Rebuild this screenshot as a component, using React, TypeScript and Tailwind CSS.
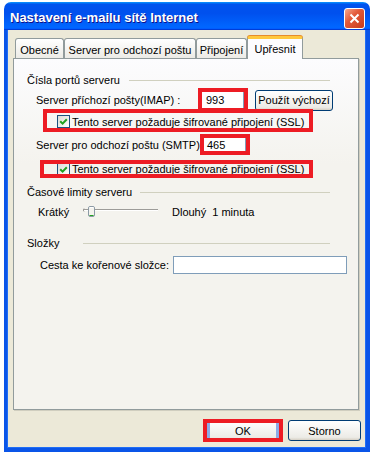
import React from "react";

const RedFrame = ({ className }: { className: string }) => (
  <div
    className={`absolute border-4 border-[#ED1C24] pointer-events-none ${className}`}
  />
);

const CheckBox = () => (
  <div className="w-[13px] h-[13px] shrink-0 border border-[#1C5180] bg-[linear-gradient(135deg,#DCDCD7,#FFFFFF)] flex items-center justify-center">
    <svg width="9" height="9" viewBox="0 0 9 9">
      <path
        d="M1.2 4.2 L3.6 6.6 L7.8 2.2"
        stroke="#21A121"
        strokeWidth="2"
        fill="none"
      />
    </svg>
  </div>
);

const GroupHeader = ({
  title,
  textClass,
  lineClass,
}: {
  title: string;
  textClass: string;
  lineClass: string;
}) => (
  <div className="h-[14px] flex items-center pl-[13px] shrink-0">
    <span className={`whitespace-nowrap ${textClass}`}>{title}</span>
    <div className={`flex-1 h-px bg-[#D0D0BF] mr-[28px] ${lineClass}`} />
  </div>
);

const xpButton =
  "rounded-[3px] border border-[#003C74] bg-[linear-gradient(180deg,#FFFFFF,#ECEBE6_86%,#D6D0C5)] flex items-center justify-center";

const Tab = ({ width, children }: { width: string; children: React.ReactNode }) => (
  <div
    className={`${width} h-[20px] shrink-0 rounded-t-[3px] border border-b-0 border-[#919B9C] bg-[linear-gradient(180deg,#FFFFFF,#ECEBE6)] flex items-center justify-center pt-[2px] whitespace-nowrap`}
  >
    {children}
  </div>
);

const Slider = () => (
  <svg width="78" height="16" viewBox="0 0 78 16" className="shrink-0">
    <path d="M2 4.5 Q0.5 6 2 7.5" stroke="#9D9C99" fill="none" />
    <line x1="2" y1="5.5" x2="76" y2="5.5" stroke="#9D9C99" />
    <line x1="2" y1="6.5" x2="76" y2="6.5" stroke="#FFFFFF" />
    <rect
      x="6.5"
      y="2.5"
      width="6"
      height="10"
      rx="1.5"
      fill="#F4F3EE"
      stroke="#8C9AA6"
    />
    <line x1="7.5" y1="11.5" x2="11.5" y2="11.5" stroke="#21A121" />
    <line x1="7.5" y1="3.5" x2="11.5" y2="3.5" stroke="#FFFFFF" />
  </svg>
);

export default function App() {
  return (
    <div className="w-[371px] h-[453px] bg-white pt-[2px] pl-[4px] font-['Liberation_Sans',Arial,sans-serif] text-[11px] leading-[14px] text-black">
      <div className="w-[366px] h-[450px] flex flex-col">
        {/* title bar */}
        <div className="h-[28px] shrink-0 rounded-t-[7px] bg-[linear-gradient(180deg,#0997FF,#0053EE_8%,#0050EE_40%,#0066FF_88%,#0066FF_93%,#005BFF_95%,#003DD7_96%,#003DD7)] flex items-start justify-between pl-[6px] pr-[5px] pt-[4px]">
          <span className="text-white font-bold text-[13px] leading-[24px] [text-shadow:1px_1px_#0F1089] whitespace-nowrap">
            Nastavení e-mailu sítě Internet
          </span>
          <div className="mt-[2px] w-[21px] h-[21px] rounded-[3px] border border-white bg-[linear-gradient(135deg,#F5A88E,#E35B3B_40%,#C73A1C)] flex items-center justify-center">
            <svg width="11" height="11" viewBox="0 0 11 11">
              <path
                d="M1.5 1.5 L9.5 9.5 M9.5 1.5 L1.5 9.5"
                stroke="#FFFFFF"
                strokeWidth="2"
              />
            </svg>
          </div>
        </div>

        {/* body */}
        <div className="flex-1 flex flex-col bg-[#ECE9D8] border-l-[3px] border-r-[4px] border-b-[4px] border-[#0A55E8] shadow-[inset_1px_0_#1F6EF5,inset_-1px_0_#1F6EF5,inset_0_-1px_#1F6EF5]">
          {/* tabs */}
          <div className="h-[28px] shrink-0 flex items-end pl-[8px]">
            <Tab width="w-[49px]">Obecné</Tab>
            <Tab width="w-[132px]">Server pro odchozí poštu</Tab>
            <Tab width="w-[51px]">Připojení</Tab>
            <div className="relative z-10 -mb-px w-[56px] h-[23px] shrink-0 rounded-t-[3px] border-x border-[#919B9C] border-t-[3px] border-t-[#FFC83C] shadow-[0_-1px_#E68B2C] bg-[#FCFCFE] flex items-center justify-center whitespace-nowrap">
              Upřesnit
            </div>
          </div>

          {/* panel */}
          <div className="ml-[6px] w-[346px] h-[352px] shrink-0 border border-[#919B9C] bg-[linear-gradient(180deg,#FCFCFE,#F4F3EE_30%)] shadow-[1px_1px_0_#D0CEBF] flex flex-col">
            <div className="mt-[14px]">
              <GroupHeader
                title="Čísla portů serveru"
                textClass=""
                lineClass="ml-[9px]"
              />
            </div>

            <div className="mt-[1px] h-[24px] flex items-center shrink-0">
              <span className="w-[184px] pl-[22px] whitespace-nowrap">
                Server příchozí pošty(IMAP) :
              </span>
              <div className="relative w-[50px] h-[24px] bg-white flex items-center pl-[8px]">
                993
                <div className="absolute right-[4px] top-[3px] bottom-[3px] w-px bg-[#7F9DB9]" />
                <RedFrame className="inset-0" />
              </div>
              <button className={`ml-[7px] w-[78px] h-[21px] ${xpButton}`}>
                Použít výchozí
              </button>
            </div>

            <div className="relative -mt-[3px] ml-[29px] w-[270px] h-[23px] shrink-0 flex items-center pl-[14px] pt-[2px]">
              <CheckBox />
              <span className="ml-[2px] whitespace-nowrap">
                Tento server požaduje šifrované připojení (SSL)
              </span>
              <RedFrame className="inset-0" />
            </div>

            <div className="mt-[2px] h-[21px] flex items-center shrink-0">
              <span className="w-[186px] pl-[22px] whitespace-nowrap">
                Server pro odchozí poštu (SMTP):
              </span>
              <div className="relative w-[50px] h-[21px] bg-white flex items-center pl-[7px]">
                465
                <div className="absolute right-[4px] top-[3px] bottom-[3px] w-px bg-[#7F9DB9]" />
                <RedFrame className="inset-0" />
              </div>
            </div>

            <div className="relative mt-[5px] ml-[26px] w-[273px] h-[18px] shrink-0 flex items-center pl-[17px]">
              <CheckBox />
              <span className="ml-[2px] whitespace-nowrap">
                Tento server požaduje šifrované připojení (SSL)
              </span>
              <RedFrame className="inset-0" />
            </div>

            <div className="mt-[7px]">
              <GroupHeader
                title="Časové limity serveru"
                textClass=""
                lineClass="ml-[8px]"
              />
            </div>

            <div className="mt-[5px] h-[16px] flex items-center pl-[24px] shrink-0">
              <span className="w-[44px]">Krátký</span>
              <Slider />
              <span className="ml-[12px] whitespace-nowrap">Dlouhý</span>
              <span className="ml-[6px] whitespace-nowrap">1 minuta</span>
            </div>

            <div className="mt-[16px]">
              <GroupHeader title="Složky" textClass="w-[56px]" lineClass="" />
            </div>

            <div className="mt-[6px] h-[18px] flex items-center pl-[26px] shrink-0">
              <span className="w-[133px] whitespace-nowrap">
                Cesta ke kořenové složce:
              </span>
              <div className="w-[174px] h-[18px] border border-[#7F9DB9] bg-white" />
            </div>
          </div>

          {/* buttons */}
          <div className="mt-[10px] flex justify-end pr-[5px] shrink-0">
            <div className="relative">
              <button
                className={`w-[76px] h-[21px] ${xpButton} shadow-[inset_4px_0_#8CAAE6,inset_-4px_0_#8CAAE6]`}
              >
                OK
              </button>
              <RedFrame className="-left-[2px] -right-[2px] -top-[1px] -bottom-[1px]" />
            </div>
            <button className={`ml-[7px] w-[73px] h-[21px] ${xpButton}`}>
              Storno
            </button>
          </div>
        </div>
      </div>
    </div>
  );
}
